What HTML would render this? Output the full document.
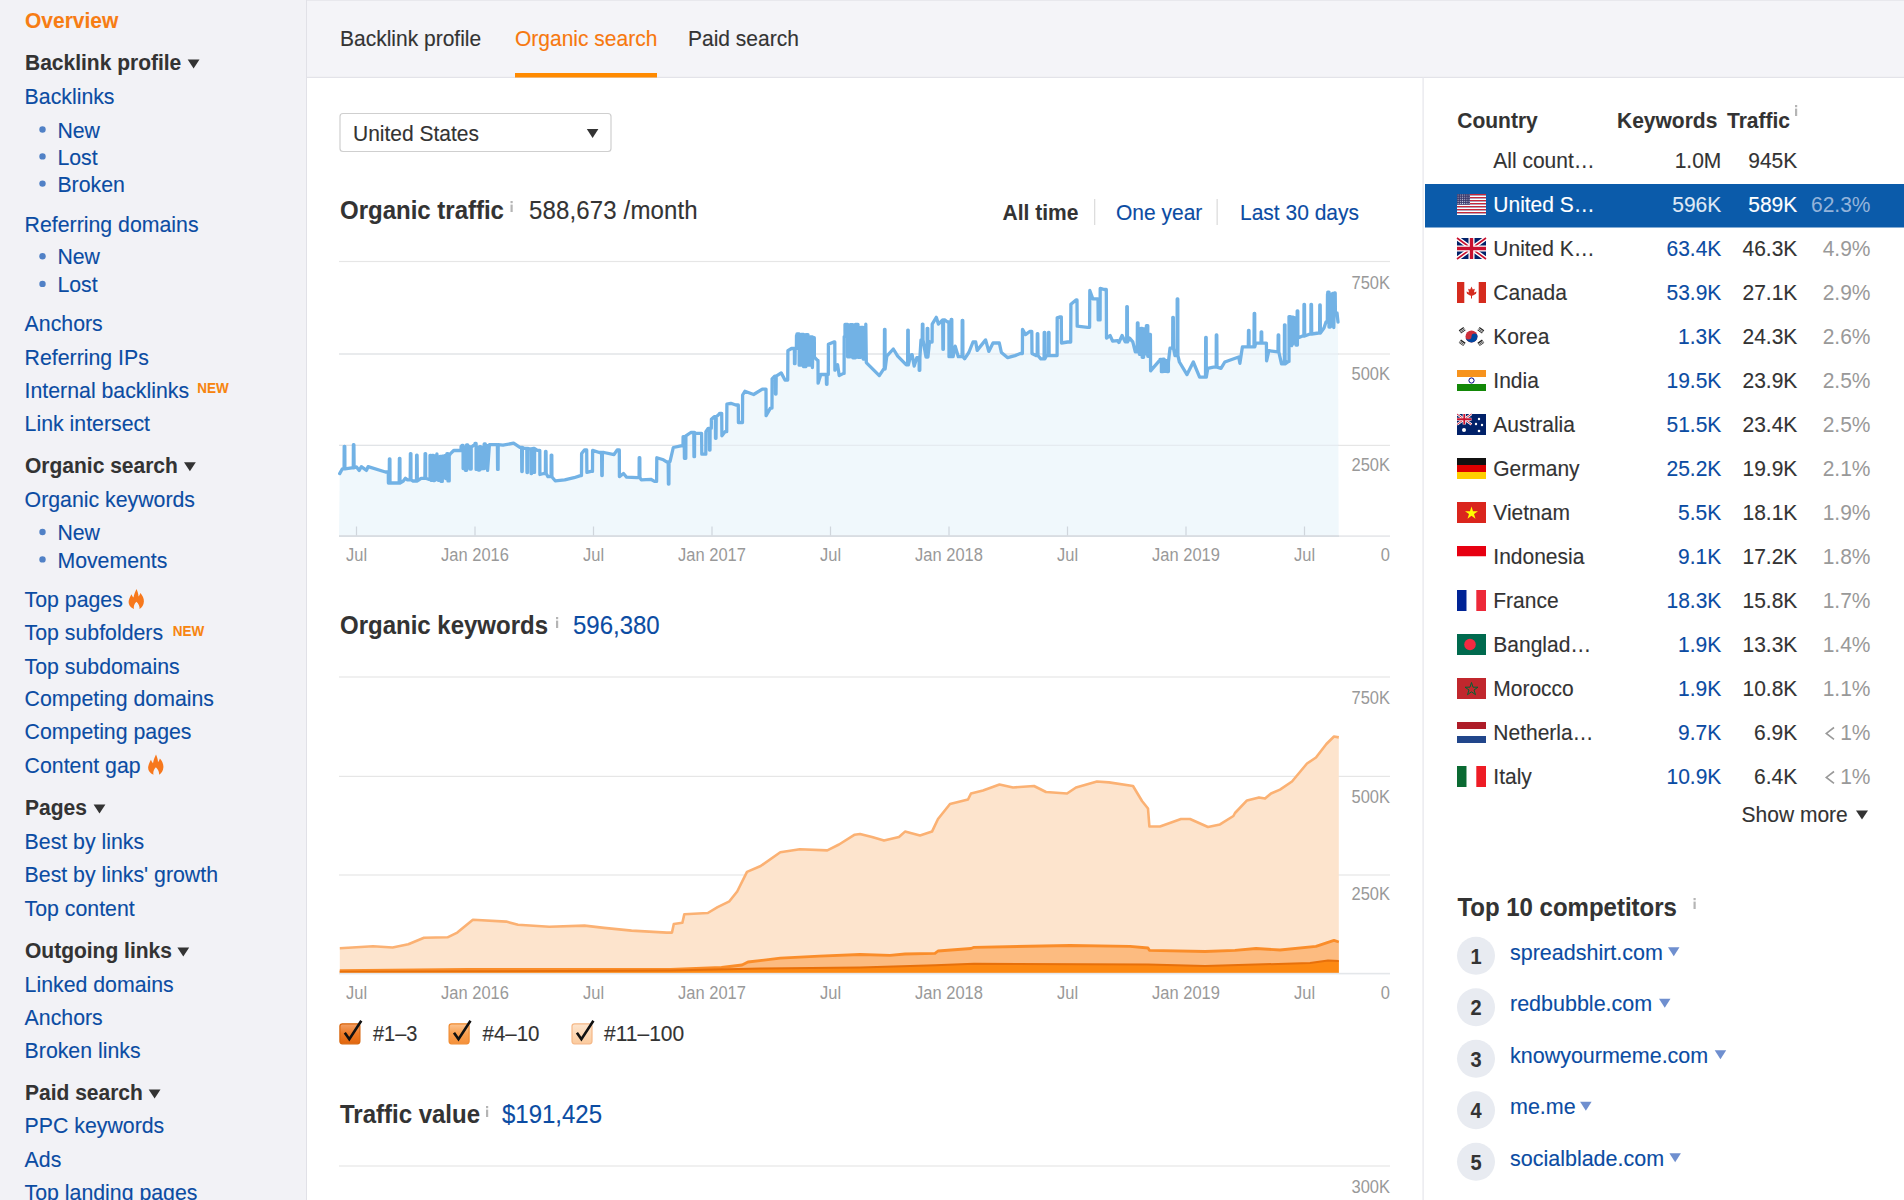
<!DOCTYPE html>
<html><head><meta charset="utf-8"><title>Organic search overview</title>
<style>
html,body{margin:0;padding:0;width:1904px;height:1200px;overflow:hidden;background:#fff}
svg{display:block;font-family:"Liberation Sans", sans-serif}
</style></head><body>
<svg width="1904" height="1200" viewBox="0 0 1904 1200">
<defs>
<linearGradient id="cb1" x1="0" y1="0" x2="0" y2="1"><stop offset="0" stop-color="#f3a066"/><stop offset="0.5" stop-color="#ec7a26"/><stop offset="1" stop-color="#e2660e"/></linearGradient>
<linearGradient id="cb2" x1="0" y1="0" x2="0" y2="1"><stop offset="0" stop-color="#fcc592"/><stop offset="0.5" stop-color="#f9a050"/><stop offset="1" stop-color="#f5903a"/></linearGradient>
<linearGradient id="cb3" x1="0" y1="0" x2="0" y2="1"><stop offset="0" stop-color="#fde5ce"/><stop offset="1" stop-color="#fbca9c"/></linearGradient>
<pattern id="stars" width="2.2" height="2.1" patternUnits="userSpaceOnUse"><rect width="2.2" height="2.1" fill="#3c3b6e"/><circle cx="1.1" cy="1.05" r="0.55" fill="#dfe3f0"/></pattern>
</defs>
<g id="sidebar">
<rect x="0" y="0" width="1904" height="1200" fill="#ffffff"/>
<rect x="0" y="0" width="306.5" height="1200" fill="#f2f2f6"/>
<rect x="306" y="0" width="1" height="1200" fill="#e1e1e7"/>
<rect x="307" y="0" width="1597" height="76" fill="#f4f4f8"/>
<rect x="307" y="0" width="1597" height="1" fill="#e8e8ed"/>
<rect x="307" y="76.5" width="1597" height="1.5" fill="#e3e3e9"/>
<rect x="1422.5" y="77" width="1.2" height="1123" fill="#e6e6ec"/>
<text transform="translate(25,28.20) scale(1,1.06)" font-size="21" font-weight="700" fill="#f77d14" stroke="#f77d14" stroke-width="0.072" text-anchor="start" >Overview</text>
<text transform="translate(25,69.90) scale(1,1.06)" font-size="21" font-weight="700" fill="#333333" stroke="#333333" stroke-width="0.072" text-anchor="start" >Backlink profile</text>
<path d="M187.7 59.5h11.8l-5.90 9z" fill="#333333"/>
<text transform="translate(24.6,104.10) scale(1,1.06)" font-size="21.3" font-weight="400" fill="#0b4ca3" stroke="#0b4ca3" stroke-width="0.12" text-anchor="start" >Backlinks</text>
<circle cx="42.5" cy="129.5" r="3.2" fill="#5181c6"/>
<text transform="translate(57.4,137.60) scale(1,1.06)" font-size="21.3" font-weight="400" fill="#0b4ca3" stroke="#0b4ca3" stroke-width="0.12" text-anchor="start" >New</text>
<circle cx="42.5" cy="156.4" r="3.2" fill="#5181c6"/>
<text transform="translate(57.4,164.50) scale(1,1.06)" font-size="21.3" font-weight="400" fill="#0b4ca3" stroke="#0b4ca3" stroke-width="0.12" text-anchor="start" >Lost</text>
<circle cx="42.5" cy="183.6" r="3.2" fill="#5181c6"/>
<text transform="translate(57.4,191.70) scale(1,1.06)" font-size="21.3" font-weight="400" fill="#0b4ca3" stroke="#0b4ca3" stroke-width="0.12" text-anchor="start" >Broken</text>
<text transform="translate(24.6,231.50) scale(1,1.06)" font-size="21.3" font-weight="400" fill="#0b4ca3" stroke="#0b4ca3" stroke-width="0.12" text-anchor="start" >Referring domains</text>
<circle cx="42.5" cy="256.20000000000005" r="3.2" fill="#5181c6"/>
<text transform="translate(57.4,264.30) scale(1,1.06)" font-size="21.3" font-weight="400" fill="#0b4ca3" stroke="#0b4ca3" stroke-width="0.12" text-anchor="start" >New</text>
<circle cx="42.5" cy="283.90000000000003" r="3.2" fill="#5181c6"/>
<text transform="translate(57.4,292.00) scale(1,1.06)" font-size="21.3" font-weight="400" fill="#0b4ca3" stroke="#0b4ca3" stroke-width="0.12" text-anchor="start" >Lost</text>
<text transform="translate(24.6,331.30) scale(1,1.06)" font-size="21.3" font-weight="400" fill="#0b4ca3" stroke="#0b4ca3" stroke-width="0.12" text-anchor="start" >Anchors</text>
<text transform="translate(24.6,364.50) scale(1,1.06)" font-size="21.3" font-weight="400" fill="#0b4ca3" stroke="#0b4ca3" stroke-width="0.12" text-anchor="start" >Referring IPs</text>
<text transform="translate(24.6,397.70) scale(1,1.06)" font-size="21.3" font-weight="400" fill="#0b4ca3" stroke="#0b4ca3" stroke-width="0.12" text-anchor="start" >Internal backlinks</text>
<text transform="translate(197.3,393.10) scale(1,1.06)" font-size="13.5" font-weight="700" fill="#f7850f" stroke="#f7850f" stroke-width="0.072" text-anchor="start" >NEW</text>
<text transform="translate(24.6,431.30) scale(1,1.06)" font-size="21.3" font-weight="400" fill="#0b4ca3" stroke="#0b4ca3" stroke-width="0.12" text-anchor="start" >Link intersect</text>
<text transform="translate(25,472.70) scale(1,1.06)" font-size="21" font-weight="700" fill="#333333" stroke="#333333" stroke-width="0.072" text-anchor="start" >Organic search</text>
<path d="M184 462.3h11.8l-5.90 9z" fill="#333333"/>
<text transform="translate(24.6,506.50) scale(1,1.06)" font-size="21.3" font-weight="400" fill="#0b4ca3" stroke="#0b4ca3" stroke-width="0.12" text-anchor="start" >Organic keywords</text>
<circle cx="42.5" cy="532.0" r="3.2" fill="#5181c6"/>
<text transform="translate(57.4,540.10) scale(1,1.06)" font-size="21.3" font-weight="400" fill="#0b4ca3" stroke="#0b4ca3" stroke-width="0.12" text-anchor="start" >New</text>
<circle cx="42.5" cy="559.4" r="3.2" fill="#5181c6"/>
<text transform="translate(57.4,567.50) scale(1,1.06)" font-size="21.3" font-weight="400" fill="#0b4ca3" stroke="#0b4ca3" stroke-width="0.12" text-anchor="start" >Movements</text>
<text transform="translate(24.6,607.10) scale(1,1.06)" font-size="21.3" font-weight="400" fill="#0b4ca3" stroke="#0b4ca3" stroke-width="0.12" text-anchor="start" >Top pages</text>
<path transform="translate(128.5,609.1)" d="M5.5 0C1.5 -1.5 -0.5 -5 0.3 -8.5C0.8 -11 2 -13 2.9 -14.9C3.5 -13.5 4.2 -12.3 5 -11.5C5.5 -15 6.8 -17.5 8 -20.2C9.2 -17.5 10 -15 10 -12.5C10.8 -13.5 11.5 -14.8 11.9 -16.1C14 -13.5 15.6 -11 15.4 -7.5C15.2 -4 13.5 -1.2 11 0C11.5 -2.5 10 -5.5 7.9 -7.4C5.8 -5.5 4.8 -2.5 5.5 0Z" fill="#f7781c"/>
<text transform="translate(24.6,640.30) scale(1,1.06)" font-size="21.3" font-weight="400" fill="#0b4ca3" stroke="#0b4ca3" stroke-width="0.12" text-anchor="start" >Top subfolders</text>
<text transform="translate(172.8,635.70) scale(1,1.06)" font-size="13.5" font-weight="700" fill="#f7850f" stroke="#f7850f" stroke-width="0.072" text-anchor="start" >NEW</text>
<text transform="translate(24.6,673.60) scale(1,1.06)" font-size="21.3" font-weight="400" fill="#0b4ca3" stroke="#0b4ca3" stroke-width="0.12" text-anchor="start" >Top subdomains</text>
<text transform="translate(24.6,706.20) scale(1,1.06)" font-size="21.3" font-weight="400" fill="#0b4ca3" stroke="#0b4ca3" stroke-width="0.12" text-anchor="start" >Competing domains</text>
<text transform="translate(24.6,739.10) scale(1,1.06)" font-size="21.3" font-weight="400" fill="#0b4ca3" stroke="#0b4ca3" stroke-width="0.12" text-anchor="start" >Competing pages</text>
<text transform="translate(24.6,772.70) scale(1,1.06)" font-size="21.3" font-weight="400" fill="#0b4ca3" stroke="#0b4ca3" stroke-width="0.12" text-anchor="start" >Content gap</text>
<path transform="translate(148,774.7)" d="M5.5 0C1.5 -1.5 -0.5 -5 0.3 -8.5C0.8 -11 2 -13 2.9 -14.9C3.5 -13.5 4.2 -12.3 5 -11.5C5.5 -15 6.8 -17.5 8 -20.2C9.2 -17.5 10 -15 10 -12.5C10.8 -13.5 11.5 -14.8 11.9 -16.1C14 -13.5 15.6 -11 15.4 -7.5C15.2 -4 13.5 -1.2 11 0C11.5 -2.5 10 -5.5 7.9 -7.4C5.8 -5.5 4.8 -2.5 5.5 0Z" fill="#f7781c"/>
<text transform="translate(25,815.00) scale(1,1.06)" font-size="21" font-weight="700" fill="#333333" stroke="#333333" stroke-width="0.072" text-anchor="start" >Pages</text>
<path d="M93.6 804.6h11.8l-5.90 9z" fill="#333333"/>
<text transform="translate(24.6,848.90) scale(1,1.06)" font-size="21.3" font-weight="400" fill="#0b4ca3" stroke="#0b4ca3" stroke-width="0.12" text-anchor="start" >Best by links</text>
<text transform="translate(24.6,882.00) scale(1,1.06)" font-size="21.3" font-weight="400" fill="#0b4ca3" stroke="#0b4ca3" stroke-width="0.12" text-anchor="start" >Best by links' growth</text>
<text transform="translate(24.6,915.50) scale(1,1.06)" font-size="21.3" font-weight="400" fill="#0b4ca3" stroke="#0b4ca3" stroke-width="0.12" text-anchor="start" >Top content</text>
<text transform="translate(25,957.90) scale(1,1.06)" font-size="21" font-weight="700" fill="#333333" stroke="#333333" stroke-width="0.072" text-anchor="start" >Outgoing links</text>
<path d="M177.4 947.5h11.8l-5.90 9z" fill="#333333"/>
<text transform="translate(24.6,991.50) scale(1,1.06)" font-size="21.3" font-weight="400" fill="#0b4ca3" stroke="#0b4ca3" stroke-width="0.12" text-anchor="start" >Linked domains</text>
<text transform="translate(24.6,1024.80) scale(1,1.06)" font-size="21.3" font-weight="400" fill="#0b4ca3" stroke="#0b4ca3" stroke-width="0.12" text-anchor="start" >Anchors</text>
<text transform="translate(24.6,1058.40) scale(1,1.06)" font-size="21.3" font-weight="400" fill="#0b4ca3" stroke="#0b4ca3" stroke-width="0.12" text-anchor="start" >Broken links</text>
<text transform="translate(25,1099.80) scale(1,1.06)" font-size="21" font-weight="700" fill="#333333" stroke="#333333" stroke-width="0.072" text-anchor="start" >Paid search</text>
<path d="M148.7 1089.4h11.8l-5.90 9z" fill="#333333"/>
<text transform="translate(24.6,1133.40) scale(1,1.06)" font-size="21.3" font-weight="400" fill="#0b4ca3" stroke="#0b4ca3" stroke-width="0.12" text-anchor="start" >PPC keywords</text>
<text transform="translate(24.6,1167.20) scale(1,1.06)" font-size="21.3" font-weight="400" fill="#0b4ca3" stroke="#0b4ca3" stroke-width="0.12" text-anchor="start" >Ads</text>
<text transform="translate(24.6,1200.20) scale(1,1.06)" font-size="21.3" font-weight="400" fill="#0b4ca3" stroke="#0b4ca3" stroke-width="0.12" text-anchor="start" >Top landing pages</text>
<text transform="translate(340,46.30) scale(1,1.06)" font-size="21" font-weight="400" fill="#333333" stroke="#333333" stroke-width="0.12" text-anchor="start" >Backlink profile</text>
<text transform="translate(515,46.30) scale(1,1.06)" font-size="21" font-weight="400" fill="#f7780f" stroke="#f7780f" stroke-width="0.12" text-anchor="start" >Organic search</text>
<text transform="translate(688,46.30) scale(1,1.06)" font-size="21" font-weight="400" fill="#333333" stroke="#333333" stroke-width="0.12" text-anchor="start" >Paid search</text>
<rect x="515" y="73" width="142" height="4.5" fill="#ff8a00"/>
<rect x="340" y="113.5" width="271" height="38" rx="3" fill="#fff" stroke="#cfcfcf" stroke-width="1.2"/>
<text transform="translate(353,140.70) scale(1,1.06)" font-size="21" font-weight="400" fill="#333333" stroke="#333333" stroke-width="0.12" text-anchor="start" >United States</text>
<path d="M586.8 129h11.6l-5.80 9z" fill="#333"/>
<text transform="translate(340,218.70) scale(1,1.06)" font-size="24" font-weight="700" fill="#333333" stroke="#333333" stroke-width="0.072" text-anchor="start" >Organic traffic</text>
<rect x="510.5" y="201" width="2.2" height="2.2" fill="#b5b5b5"/><rect x="510.5" y="204.6" width="2.2" height="7.4" fill="#b5b5b5"/>
<text transform="translate(529,218.70) scale(1,1.06)" font-size="24" font-weight="400" fill="#333333" stroke="#333333" stroke-width="0.12" text-anchor="start" letter-spacing="0.15">588,673 /month</text>
<text transform="translate(1002.5,220.10) scale(1,1.06)" font-size="21" font-weight="700" fill="#333333" stroke="#333333" stroke-width="0.072" text-anchor="start" >All time</text>
<rect x="1094" y="199" width="1.3" height="26" fill="#dddddd"/>
<text transform="translate(1116,220.10) scale(1,1.06)" font-size="21" font-weight="400" fill="#0b4ca3" stroke="#0b4ca3" stroke-width="0.12" text-anchor="start" >One year</text>
<rect x="1216.5" y="199" width="1.3" height="26" fill="#dddddd"/>
<text transform="translate(1240,220.10) scale(1,1.06)" font-size="21" font-weight="400" fill="#0b4ca3" stroke="#0b4ca3" stroke-width="0.12" text-anchor="start" >Last 30 days</text>
</g>
<g id="main">
<rect x="339" y="260.9" width="1051" height="1.2" fill="#e6e6e6"/>
<rect x="339" y="353.4" width="1051" height="1.2" fill="#e6e6e6"/>
<rect x="339" y="444.79999999999995" width="1051" height="1.2" fill="#e6e6e6"/>
<polygon points="339.7,473.6 342.4,468.8 344.1,468.8 344.2,446.3 344.8,446.3 344.9,468.8 351.8,467.8 353.3,467.8 353.4,444.7 353.9,444.7 354.1,467.8 356.5,467.0 359.2,470.4 361.3,466.7 366.5,470.4 368.1,466.7 385.4,472.0 388.3,472.0 388.4,483.0 389.2,483.0 389.4,458.9 389.9,458.9 390.0,483.0 394.9,483.0 399.2,483.0 399.4,458.3 399.9,458.3 400.0,483.0 403.3,481.0 405.4,478.3 407.5,479.9 410.2,479.9 410.4,453.6 410.9,453.6 411.0,479.9 413.0,481.0 416.5,481.0 416.6,455.2 417.1,455.2 417.3,481.0 421.1,478.3 424.9,478.3 425.1,453.6 425.6,453.6 425.7,478.3 428.5,479.3 430.0,479.3 430.0,455.3 431.1,455.3 431.1,480.4 432.3,480.4 432.3,455.5 433.4,455.5 433.4,480.5 434.6,480.5 434.6,456.0 435.7,456.0 435.7,479.7 436.9,479.7 436.9,453.9 438.5,480.4 440.0,480.4 440.0,456.3 441.1,456.3 441.1,481.4 442.3,481.4 442.3,456.1 443.4,456.1 443.4,477.6 444.6,477.6 444.6,455.6 445.7,455.6 445.7,478.5 446.9,478.5 446.9,453.6 448.0,453.6 448.0,480.9 449.2,480.9 449.2,455.6 450.5,453.6 453.7,450.5 460.0,450.5 461.0,450.5 461.1,446.3 462.0,446.3 462.0,445.5 463.1,445.5 463.1,468.6 464.3,468.6 464.3,447.5 465.4,447.5 465.4,470.3 466.6,470.3 466.6,444.8 467.7,444.8 467.7,467.8 468.9,467.8 468.9,446.6 470.0,446.6 470.0,469.0 471.2,469.0 471.2,447.3 473.7,445.2 475.0,445.2 475.0,443.5 476.1,443.5 476.1,469.4 477.3,469.4 477.3,447.4 478.4,447.4 478.4,470.0 479.6,470.0 479.6,446.6 480.7,446.6 480.7,468.8 481.9,468.8 481.9,447.4 483.0,447.4 483.0,468.5 484.2,468.5 484.2,443.9 485.3,443.9 485.3,468.2 486.5,468.2 486.5,445.7 487.6,445.7 487.6,470.4 489.4,444.7 497.4,444.7 497.6,469.4 498.1,469.4 498.2,444.7 503.0,445.2 513.6,443.1 519.9,447.3 521.6,447.3 521.8,471.5 522.2,471.5 522.4,447.3 524.0,448.4 526.8,448.4 527.0,472.5 527.5,472.5 527.6,448.4 529.3,448.9 531.0,448.9 531.1,473.6 531.6,473.6 531.8,448.9 533.0,448.5 533.8,448.5 534.0,472.4 534.5,472.4 534.6,448.5 537.4,450.4 539.8,450.4 539.9,474.5 543.7,473.5 545.4,473.5 545.5,451.4 546.0,451.4 546.2,473.5 547.9,476.6 551.1,476.6 551.2,455.1 551.8,455.1 551.9,476.6 552.6,477.7 555.2,480.8 564.7,479.8 574.1,477.7 580.4,475.6 581.5,475.6 581.6,453.5 584.6,449.9 586.0,450.0 586.7,450.0 586.9,472.4 590.9,471.4 592.5,471.4 592.6,450.4 599.3,452.5 601.6,452.5 601.8,475.6 602.2,475.6 602.4,452.5 604.0,452.5 614.0,454.6 617.2,449.9 619.3,449.9 619.4,476.6 623.5,473.5 626.6,477.2 637.1,477.7 639.1,477.7 639.2,457.7 639.8,457.7 639.9,477.7 641.3,479.8 650.8,479.3 654.5,481.4 656.6,481.4 656.8,457.7 663.4,459.8 666.6,461.9 668.2,461.9 668.4,484.0 668.9,484.0 669.0,461.9 670.0,461.7 673.3,447.5 680.8,445.8 683.0,445.8 683.1,436.7 684.2,436.7 684.4,458.3 685.8,458.3 685.9,435.8 690.8,432.5 693.8,432.5 694.0,456.7 694.5,456.7 694.6,432.5 695.0,433.3 700.0,433.3 701.6,433.3 701.8,454.2 704.2,454.2 705.8,454.2 705.9,431.7 708.3,428.3 709.3,428.3 709.5,450.0 710.0,450.0 710.1,428.3 711.3,428.3 711.4,419.2 714.2,416.7 715.4,416.7 715.5,438.3 716.0,438.3 716.2,416.7 718.3,415.0 719.7,413.3 721.7,413.3 721.9,435.8 725.0,431.7 726.7,431.7 726.9,404.2 730.8,403.3 735.8,405.0 738.3,405.0 738.4,422.5 740.8,422.5 742.5,422.5 742.6,395.0 744.9,391.3 753.6,394.5 762.3,389.1 763.6,389.1 766.0,389.1 766.1,415.7 770.4,408.1 772.0,408.1 772.1,378.8 774.7,376.1 775.4,376.1 775.5,394.0 776.0,394.0 776.2,376.1 781.2,372.9 785.0,380.0 787.7,380.0 787.9,350.7 791.5,348.5 794.4,348.5 794.5,363.7 795.0,363.7 795.2,348.5 796.4,348.5 796.5,335.5 797.0,335.5 797.0,334.0 799.2,334.0 799.2,365.2 801.4,365.2 801.4,334.4 803.6,334.4 803.6,366.7 805.8,366.7 805.8,334.7 808.0,334.7 808.0,365.1 810.2,365.1 810.2,336.9 812.4,336.9 812.4,367.5 813.2,337.7 814.3,337.7 814.4,357.2 817.5,360.4 818.0,360.4 818.1,383.2 820.8,374.5 825.1,374.5 826.3,374.5 826.5,384.3 827.0,384.3 827.1,374.5 828.3,374.5 828.4,344.2 833.8,342.0 834.8,342.0 834.9,370.2 837.6,364.8 839.2,375.6 843.5,373.4 844.1,373.4 844.2,336.6 845.0,336.6 845.0,324.4 847.6,324.4 847.6,356.8 850.2,356.8 850.2,324.7 852.8,324.7 852.8,357.8 855.4,357.8 855.4,324.5 858.0,324.5 858.0,357.3 860.6,357.3 860.6,327.3 863.2,327.3 863.2,359.0 865.8,359.0 865.8,324.2 866.3,362.6 879.3,375.6 883.6,369.1 884.3,369.1 884.5,329.5 885.0,329.5 885.1,369.1 886.8,356.1 893.3,349.0 897.7,356.1 906.3,364.8 907.6,364.8 907.8,330.1 908.2,330.1 908.4,364.8 910.7,355.0 912.1,354.6 914.2,366.1 916.8,357.7 919.1,357.7 919.2,370.3 919.8,370.3 919.9,357.7 921.0,339.9 922.2,339.9 922.4,324.1 922.9,324.1 923.0,339.9 926.0,357.0 927.1,357.0 927.2,328.3 927.8,328.3 927.9,357.0 929.5,342.0 932.1,342.0 932.2,324.1 936.3,317.3 938.4,324.1 942.6,319.9 942.7,319.9 942.9,349.3 943.4,349.3 943.5,319.9 944.7,319.9 947.5,322.0 948.9,322.0 949.0,356.7 951.1,356.7 951.2,319.4 951.8,319.4 951.9,356.7 953.1,356.7 955.2,346.2 958.3,356.7 962.1,356.7 962.2,320.4 962.8,320.4 962.9,356.7 964.6,358.8 968.8,352.5 973.0,342.0 975.7,342.0 977.2,350.4 985.6,339.9 988.8,351.4 993.0,343.0 999.3,343.0 1001.4,352.5 1007.7,357.7 1015.0,355.6 1020.3,353.5 1022.4,353.5 1022.5,329.4 1025.5,334.6 1029.7,331.5 1031.8,331.5 1032.0,353.5 1036.0,355.6 1037.2,355.6 1037.3,333.6 1037.8,333.6 1038.0,355.6 1040.8,358.8 1044.1,358.8 1044.2,332.5 1044.8,332.5 1044.9,358.8 1046.6,355.6 1048.3,355.6 1048.5,332.5 1049.0,332.5 1049.1,355.6 1053.9,355.6 1057.1,355.6 1057.2,317.8 1060.2,316.8 1061.3,316.8 1061.5,343.0 1067.6,342.0 1070.7,342.0 1070.9,304.2 1076.0,300.0 1077.0,300.0 1077.2,326.2 1087.5,327.3 1089.6,327.3 1089.8,290.5 1092.8,298.9 1098.0,298.9 1098.2,319.9 1100.1,319.9 1100.2,288.4 1104.3,289.5 1106.3,289.5 1106.5,338.1 1110.1,335.5 1112.6,341.2 1117.6,340.6 1118.9,342.5 1122.1,335.5 1125.2,341.9 1126.7,341.9 1126.8,306.6 1127.3,306.6 1127.5,341.9 1129.6,338.1 1132.8,341.9 1135.3,351.9 1137.2,351.9 1137.4,322.9 1138.0,322.9 1138.0,329.1 1139.4,329.1 1139.4,354.3 1140.8,354.3 1140.8,328.5 1142.2,328.5 1142.2,357.3 1143.6,357.3 1143.6,329.0 1145.0,329.0 1145.0,353.9 1146.4,353.9 1146.4,325.7 1147.8,325.7 1147.8,356.3 1149.2,334.3 1150.4,334.3 1150.6,370.8 1159.2,360.8 1160.0,360.8 1160.0,359.5 1161.4,359.5 1161.4,371.7 1162.8,371.7 1162.8,359.2 1164.2,359.2 1164.2,371.4 1165.6,371.4 1165.6,360.7 1167.0,360.7 1167.0,371.6 1168.4,371.6 1168.4,362.2 1170.0,348.2 1172.7,348.2 1172.8,317.3 1173.3,317.3 1173.5,348.2 1175.0,355.7 1177.1,355.7 1177.2,299.0 1177.8,299.0 1177.9,355.7 1179.4,362.0 1187.0,374.6 1193.3,362.0 1199.6,377.1 1205.5,377.1 1205.7,337.4 1206.2,337.4 1206.3,377.1 1207.8,368.3 1213.5,367.1 1216.2,367.1 1216.3,334.9 1216.8,334.9 1217.0,367.1 1221.0,368.3 1224.8,362.0 1238.7,357.0 1239.9,363.3 1242.4,346.9 1248.3,346.9 1248.5,330.5 1249.0,330.5 1249.1,346.9 1251.3,346.9 1254.0,346.9 1254.2,313.5 1254.7,313.5 1254.8,346.9 1255.7,343.1 1261.0,343.1 1261.2,331.8 1261.7,331.8 1261.8,343.1 1266.4,343.1 1266.6,360.8 1268.9,350.7 1277.7,351.9 1278.0,351.9 1278.2,334.9 1278.7,334.9 1278.8,351.9 1281.5,363.9 1284.3,363.9 1284.5,324.8 1285.0,324.8 1285.1,363.9 1288.5,361.4 1289.0,361.4 1289.0,316.6 1290.4,316.6 1290.4,342.7 1291.8,342.7 1291.8,317.2 1293.2,317.2 1293.2,343.0 1294.6,343.0 1294.6,317.9 1296.0,317.9 1296.0,345.1 1297.4,345.1 1297.4,319.3 1291.6,345.6 1296.0,338.0 1297.1,338.0 1297.2,311.0 1297.8,311.0 1297.9,338.0 1302.5,336.0 1303.9,336.0 1304.0,304.5 1304.5,304.5 1304.7,336.0 1310.0,334.0 1310.9,334.0 1311.0,304.5 1311.5,304.5 1311.7,334.0 1318.5,333.0 1319.6,333.0 1319.8,305.0 1320.2,305.0 1320.4,333.0 1324.0,328.0 1326.0,322.0 1327.3,322.0 1327.5,294.0 1327.8,294.0 1327.8,292.1 1329.0,292.1 1329.0,327.1 1330.2,327.1 1330.2,294.3 1331.4,294.3 1331.4,326.0 1332.6,326.0 1332.6,293.4 1333.8,293.4 1333.8,327.5 1334.5,293.0 1335.2,293.0 1335.4,313.0 1337.0,313.0 1338.0,322.0 1338.7,536.0 339.0,536.0" fill="#f0f8fc"/>
<rect x="339" y="353.4" width="1000" height="1.2" fill="#dde3e8" opacity="0.6"/>
<rect x="339" y="444.79999999999995" width="1000" height="1.2" fill="#dde3e8" opacity="0.6"/>
<polyline points="339.7,473.6 342.4,468.8 344.1,468.8 344.2,446.3 344.8,446.3 344.9,468.8 351.8,467.8 353.3,467.8 353.4,444.7 353.9,444.7 354.1,467.8 356.5,467.0 359.2,470.4 361.3,466.7 366.5,470.4 368.1,466.7 385.4,472.0 388.3,472.0 388.4,483.0 389.2,483.0 389.4,458.9 389.9,458.9 390.0,483.0 394.9,483.0 399.2,483.0 399.4,458.3 399.9,458.3 400.0,483.0 403.3,481.0 405.4,478.3 407.5,479.9 410.2,479.9 410.4,453.6 410.9,453.6 411.0,479.9 413.0,481.0 416.5,481.0 416.6,455.2 417.1,455.2 417.3,481.0 421.1,478.3 424.9,478.3 425.1,453.6 425.6,453.6 425.7,478.3 428.5,479.3 430.0,479.3 430.0,455.3 431.1,455.3 431.1,480.4 432.3,480.4 432.3,455.5 433.4,455.5 433.4,480.5 434.6,480.5 434.6,456.0 435.7,456.0 435.7,479.7 436.9,479.7 436.9,453.9 438.5,480.4 440.0,480.4 440.0,456.3 441.1,456.3 441.1,481.4 442.3,481.4 442.3,456.1 443.4,456.1 443.4,477.6 444.6,477.6 444.6,455.6 445.7,455.6 445.7,478.5 446.9,478.5 446.9,453.6 448.0,453.6 448.0,480.9 449.2,480.9 449.2,455.6 450.5,453.6 453.7,450.5 460.0,450.5 461.0,450.5 461.1,446.3 462.0,446.3 462.0,445.5 463.1,445.5 463.1,468.6 464.3,468.6 464.3,447.5 465.4,447.5 465.4,470.3 466.6,470.3 466.6,444.8 467.7,444.8 467.7,467.8 468.9,467.8 468.9,446.6 470.0,446.6 470.0,469.0 471.2,469.0 471.2,447.3 473.7,445.2 475.0,445.2 475.0,443.5 476.1,443.5 476.1,469.4 477.3,469.4 477.3,447.4 478.4,447.4 478.4,470.0 479.6,470.0 479.6,446.6 480.7,446.6 480.7,468.8 481.9,468.8 481.9,447.4 483.0,447.4 483.0,468.5 484.2,468.5 484.2,443.9 485.3,443.9 485.3,468.2 486.5,468.2 486.5,445.7 487.6,445.7 487.6,470.4 489.4,444.7 497.4,444.7 497.6,469.4 498.1,469.4 498.2,444.7 503.0,445.2 513.6,443.1 519.9,447.3 521.6,447.3 521.8,471.5 522.2,471.5 522.4,447.3 524.0,448.4 526.8,448.4 527.0,472.5 527.5,472.5 527.6,448.4 529.3,448.9 531.0,448.9 531.1,473.6 531.6,473.6 531.8,448.9 533.0,448.5 533.8,448.5 534.0,472.4 534.5,472.4 534.6,448.5 537.4,450.4 539.8,450.4 539.9,474.5 543.7,473.5 545.4,473.5 545.5,451.4 546.0,451.4 546.2,473.5 547.9,476.6 551.1,476.6 551.2,455.1 551.8,455.1 551.9,476.6 552.6,477.7 555.2,480.8 564.7,479.8 574.1,477.7 580.4,475.6 581.5,475.6 581.6,453.5 584.6,449.9 586.0,450.0 586.7,450.0 586.9,472.4 590.9,471.4 592.5,471.4 592.6,450.4 599.3,452.5 601.6,452.5 601.8,475.6 602.2,475.6 602.4,452.5 604.0,452.5 614.0,454.6 617.2,449.9 619.3,449.9 619.4,476.6 623.5,473.5 626.6,477.2 637.1,477.7 639.1,477.7 639.2,457.7 639.8,457.7 639.9,477.7 641.3,479.8 650.8,479.3 654.5,481.4 656.6,481.4 656.8,457.7 663.4,459.8 666.6,461.9 668.2,461.9 668.4,484.0 668.9,484.0 669.0,461.9 670.0,461.7 673.3,447.5 680.8,445.8 683.0,445.8 683.1,436.7 684.2,436.7 684.4,458.3 685.8,458.3 685.9,435.8 690.8,432.5 693.8,432.5 694.0,456.7 694.5,456.7 694.6,432.5 695.0,433.3 700.0,433.3 701.6,433.3 701.8,454.2 704.2,454.2 705.8,454.2 705.9,431.7 708.3,428.3 709.3,428.3 709.5,450.0 710.0,450.0 710.1,428.3 711.3,428.3 711.4,419.2 714.2,416.7 715.4,416.7 715.5,438.3 716.0,438.3 716.2,416.7 718.3,415.0 719.7,413.3 721.7,413.3 721.9,435.8 725.0,431.7 726.7,431.7 726.9,404.2 730.8,403.3 735.8,405.0 738.3,405.0 738.4,422.5 740.8,422.5 742.5,422.5 742.6,395.0 744.9,391.3 753.6,394.5 762.3,389.1 763.6,389.1 766.0,389.1 766.1,415.7 770.4,408.1 772.0,408.1 772.1,378.8 774.7,376.1 775.4,376.1 775.5,394.0 776.0,394.0 776.2,376.1 781.2,372.9 785.0,380.0 787.7,380.0 787.9,350.7 791.5,348.5 794.4,348.5 794.5,363.7 795.0,363.7 795.2,348.5 796.4,348.5 796.5,335.5 797.0,335.5 797.0,334.0 799.2,334.0 799.2,365.2 801.4,365.2 801.4,334.4 803.6,334.4 803.6,366.7 805.8,366.7 805.8,334.7 808.0,334.7 808.0,365.1 810.2,365.1 810.2,336.9 812.4,336.9 812.4,367.5 813.2,337.7 814.3,337.7 814.4,357.2 817.5,360.4 818.0,360.4 818.1,383.2 820.8,374.5 825.1,374.5 826.3,374.5 826.5,384.3 827.0,384.3 827.1,374.5 828.3,374.5 828.4,344.2 833.8,342.0 834.8,342.0 834.9,370.2 837.6,364.8 839.2,375.6 843.5,373.4 844.1,373.4 844.2,336.6 845.0,336.6 845.0,324.4 847.6,324.4 847.6,356.8 850.2,356.8 850.2,324.7 852.8,324.7 852.8,357.8 855.4,357.8 855.4,324.5 858.0,324.5 858.0,357.3 860.6,357.3 860.6,327.3 863.2,327.3 863.2,359.0 865.8,359.0 865.8,324.2 866.3,362.6 879.3,375.6 883.6,369.1 884.3,369.1 884.5,329.5 885.0,329.5 885.1,369.1 886.8,356.1 893.3,349.0 897.7,356.1 906.3,364.8 907.6,364.8 907.8,330.1 908.2,330.1 908.4,364.8 910.7,355.0 912.1,354.6 914.2,366.1 916.8,357.7 919.1,357.7 919.2,370.3 919.8,370.3 919.9,357.7 921.0,339.9 922.2,339.9 922.4,324.1 922.9,324.1 923.0,339.9 926.0,357.0 927.1,357.0 927.2,328.3 927.8,328.3 927.9,357.0 929.5,342.0 932.1,342.0 932.2,324.1 936.3,317.3 938.4,324.1 942.6,319.9 942.7,319.9 942.9,349.3 943.4,349.3 943.5,319.9 944.7,319.9 947.5,322.0 948.9,322.0 949.0,356.7 951.1,356.7 951.2,319.4 951.8,319.4 951.9,356.7 953.1,356.7 955.2,346.2 958.3,356.7 962.1,356.7 962.2,320.4 962.8,320.4 962.9,356.7 964.6,358.8 968.8,352.5 973.0,342.0 975.7,342.0 977.2,350.4 985.6,339.9 988.8,351.4 993.0,343.0 999.3,343.0 1001.4,352.5 1007.7,357.7 1015.0,355.6 1020.3,353.5 1022.4,353.5 1022.5,329.4 1025.5,334.6 1029.7,331.5 1031.8,331.5 1032.0,353.5 1036.0,355.6 1037.2,355.6 1037.3,333.6 1037.8,333.6 1038.0,355.6 1040.8,358.8 1044.1,358.8 1044.2,332.5 1044.8,332.5 1044.9,358.8 1046.6,355.6 1048.3,355.6 1048.5,332.5 1049.0,332.5 1049.1,355.6 1053.9,355.6 1057.1,355.6 1057.2,317.8 1060.2,316.8 1061.3,316.8 1061.5,343.0 1067.6,342.0 1070.7,342.0 1070.9,304.2 1076.0,300.0 1077.0,300.0 1077.2,326.2 1087.5,327.3 1089.6,327.3 1089.8,290.5 1092.8,298.9 1098.0,298.9 1098.2,319.9 1100.1,319.9 1100.2,288.4 1104.3,289.5 1106.3,289.5 1106.5,338.1 1110.1,335.5 1112.6,341.2 1117.6,340.6 1118.9,342.5 1122.1,335.5 1125.2,341.9 1126.7,341.9 1126.8,306.6 1127.3,306.6 1127.5,341.9 1129.6,338.1 1132.8,341.9 1135.3,351.9 1137.2,351.9 1137.4,322.9 1138.0,322.9 1138.0,329.1 1139.4,329.1 1139.4,354.3 1140.8,354.3 1140.8,328.5 1142.2,328.5 1142.2,357.3 1143.6,357.3 1143.6,329.0 1145.0,329.0 1145.0,353.9 1146.4,353.9 1146.4,325.7 1147.8,325.7 1147.8,356.3 1149.2,334.3 1150.4,334.3 1150.6,370.8 1159.2,360.8 1160.0,360.8 1160.0,359.5 1161.4,359.5 1161.4,371.7 1162.8,371.7 1162.8,359.2 1164.2,359.2 1164.2,371.4 1165.6,371.4 1165.6,360.7 1167.0,360.7 1167.0,371.6 1168.4,371.6 1168.4,362.2 1170.0,348.2 1172.7,348.2 1172.8,317.3 1173.3,317.3 1173.5,348.2 1175.0,355.7 1177.1,355.7 1177.2,299.0 1177.8,299.0 1177.9,355.7 1179.4,362.0 1187.0,374.6 1193.3,362.0 1199.6,377.1 1205.5,377.1 1205.7,337.4 1206.2,337.4 1206.3,377.1 1207.8,368.3 1213.5,367.1 1216.2,367.1 1216.3,334.9 1216.8,334.9 1217.0,367.1 1221.0,368.3 1224.8,362.0 1238.7,357.0 1239.9,363.3 1242.4,346.9 1248.3,346.9 1248.5,330.5 1249.0,330.5 1249.1,346.9 1251.3,346.9 1254.0,346.9 1254.2,313.5 1254.7,313.5 1254.8,346.9 1255.7,343.1 1261.0,343.1 1261.2,331.8 1261.7,331.8 1261.8,343.1 1266.4,343.1 1266.6,360.8 1268.9,350.7 1277.7,351.9 1278.0,351.9 1278.2,334.9 1278.7,334.9 1278.8,351.9 1281.5,363.9 1284.3,363.9 1284.5,324.8 1285.0,324.8 1285.1,363.9 1288.5,361.4 1289.0,361.4 1289.0,316.6 1290.4,316.6 1290.4,342.7 1291.8,342.7 1291.8,317.2 1293.2,317.2 1293.2,343.0 1294.6,343.0 1294.6,317.9 1296.0,317.9 1296.0,345.1 1297.4,345.1 1297.4,319.3 1291.6,345.6 1296.0,338.0 1297.1,338.0 1297.2,311.0 1297.8,311.0 1297.9,338.0 1302.5,336.0 1303.9,336.0 1304.0,304.5 1304.5,304.5 1304.7,336.0 1310.0,334.0 1310.9,334.0 1311.0,304.5 1311.5,304.5 1311.7,334.0 1318.5,333.0 1319.6,333.0 1319.8,305.0 1320.2,305.0 1320.4,333.0 1324.0,328.0 1326.0,322.0 1327.3,322.0 1327.5,294.0 1327.8,294.0 1327.8,292.1 1329.0,292.1 1329.0,327.1 1330.2,327.1 1330.2,294.3 1331.4,294.3 1331.4,326.0 1332.6,326.0 1332.6,293.4 1333.8,293.4 1333.8,327.5 1334.5,293.0 1335.2,293.0 1335.4,313.0 1337.0,313.0 1338.0,322.0" fill="none" stroke="#72b2e5" stroke-width="3.3" stroke-linejoin="round" stroke-linecap="round"/>
<rect x="339" y="535.3" width="1051" height="1.6" fill="#e6e7ea"/><rect x="339" y="535.3" width="1000" height="1.6" fill="#d6dce2"/>
<rect x="355.9" y="526.5" width="1.2" height="9" fill="#d0d6dc"/>
<rect x="474.4" y="526.5" width="1.2" height="9" fill="#d0d6dc"/>
<rect x="592.9" y="526.5" width="1.2" height="9" fill="#d0d6dc"/>
<rect x="711.4" y="526.5" width="1.2" height="9" fill="#d0d6dc"/>
<rect x="829.9" y="526.5" width="1.2" height="9" fill="#d0d6dc"/>
<rect x="948.4" y="526.5" width="1.2" height="9" fill="#d0d6dc"/>
<rect x="1066.9" y="526.5" width="1.2" height="9" fill="#d0d6dc"/>
<rect x="1185.4" y="526.5" width="1.2" height="9" fill="#d0d6dc"/>
<rect x="1303.9" y="526.5" width="1.2" height="9" fill="#d0d6dc"/>
<text transform="translate(356.5,561.40) scale(1,1.06)" font-size="16.5" font-weight="400" fill="#999999" stroke="#999999" stroke-width="0" text-anchor="middle" >Jul</text>
<text transform="translate(475.0,561.40) scale(1,1.06)" font-size="16.5" font-weight="400" fill="#999999" stroke="#999999" stroke-width="0" text-anchor="middle" >Jan 2016</text>
<text transform="translate(593.5,561.40) scale(1,1.06)" font-size="16.5" font-weight="400" fill="#999999" stroke="#999999" stroke-width="0" text-anchor="middle" >Jul</text>
<text transform="translate(712.0,561.40) scale(1,1.06)" font-size="16.5" font-weight="400" fill="#999999" stroke="#999999" stroke-width="0" text-anchor="middle" >Jan 2017</text>
<text transform="translate(830.5,561.40) scale(1,1.06)" font-size="16.5" font-weight="400" fill="#999999" stroke="#999999" stroke-width="0" text-anchor="middle" >Jul</text>
<text transform="translate(949.0,561.40) scale(1,1.06)" font-size="16.5" font-weight="400" fill="#999999" stroke="#999999" stroke-width="0" text-anchor="middle" >Jan 2018</text>
<text transform="translate(1067.5,561.40) scale(1,1.06)" font-size="16.5" font-weight="400" fill="#999999" stroke="#999999" stroke-width="0" text-anchor="middle" >Jul</text>
<text transform="translate(1186.0,561.40) scale(1,1.06)" font-size="16.5" font-weight="400" fill="#999999" stroke="#999999" stroke-width="0" text-anchor="middle" >Jan 2019</text>
<text transform="translate(1304.5,561.40) scale(1,1.06)" font-size="16.5" font-weight="400" fill="#999999" stroke="#999999" stroke-width="0" text-anchor="middle" >Jul</text>
<text transform="translate(1390,288.60) scale(1,1.06)" font-size="16.5" font-weight="400" fill="#999999" stroke="#999999" stroke-width="0" text-anchor="end" >750K</text>
<text transform="translate(1390,379.80) scale(1,1.06)" font-size="16.5" font-weight="400" fill="#999999" stroke="#999999" stroke-width="0" text-anchor="end" >500K</text>
<text transform="translate(1390,471.10) scale(1,1.06)" font-size="16.5" font-weight="400" fill="#999999" stroke="#999999" stroke-width="0" text-anchor="end" >250K</text>
<text transform="translate(1390,561.40) scale(1,1.06)" font-size="16.5" font-weight="400" fill="#999999" stroke="#999999" stroke-width="0" text-anchor="end" >0</text>
<text transform="translate(340,634.20) scale(1,1.06)" font-size="24" font-weight="700" fill="#333333" stroke="#333333" stroke-width="0.072" text-anchor="start" >Organic keywords</text>
<rect x="556" y="617" width="2.2" height="2.2" fill="#b5b5b5"/><rect x="556" y="620.6" width="2.2" height="7.4" fill="#b5b5b5"/>
<text transform="translate(573,634.20) scale(1,1.06)" font-size="24" font-weight="400" fill="#0b4ca3" stroke="#0b4ca3" stroke-width="0.12" text-anchor="start" >596,380</text>
<rect x="339" y="676.4" width="1051" height="1.2" fill="#e6e6e6"/>
<rect x="339" y="775.8" width="1051" height="1.2" fill="#e6e6e6"/>
<rect x="339" y="874.4" width="1051" height="1.2" fill="#e6e6e6"/>
<polygon points="339.8,948.3 373.0,946.3 392.6,947.5 408.3,944.3 424.0,937.7 447.5,937.3 457.3,932.6 472.9,919.7 506.2,921.6 518.0,924.8 549.3,926.7 584.5,925.6 604.1,927.9 631.5,930.6 666.7,932.6 672.0,932.6 673.8,924.0 682.4,922.8 684.3,914.2 707.8,913.0 717.6,907.1 729.4,901.3 737.2,891.5 747.0,871.9 760.7,866.0 780.3,852.3 799.8,849.2 827.3,850.4 839.0,844.5 854.7,834.7 860.0,834.0 872.0,837.0 884.0,840.6 899.0,837.0 905.0,831.6 920.0,835.5 932.0,831.6 938.0,819.0 950.0,804.0 968.0,799.5 971.0,793.5 983.0,790.5 999.5,784.5 1013.0,787.5 1034.0,786.0 1046.0,792.0 1067.0,793.5 1076.0,787.5 1097.0,781.5 1109.0,782.4 1133.0,786.0 1142.0,801.0 1148.0,808.5 1149.4,826.5 1160.0,826.5 1181.0,819.0 1190.0,819.0 1208.0,827.0 1220.0,824.4 1233.4,816.0 1235.0,813.0 1247.0,800.4 1259.0,797.4 1265.0,798.6 1271.0,793.5 1280.0,789.6 1292.0,781.5 1307.0,763.5 1316.0,757.5 1326.4,744.0 1334.0,736.5 1338.8,737.4 1338.8,973.4 339.8,973.4" fill="#fde4cd"/>
<polyline points="339.8,948.3 373.0,946.3 392.6,947.5 408.3,944.3 424.0,937.7 447.5,937.3 457.3,932.6 472.9,919.7 506.2,921.6 518.0,924.8 549.3,926.7 584.5,925.6 604.1,927.9 631.5,930.6 666.7,932.6 672.0,932.6 673.8,924.0 682.4,922.8 684.3,914.2 707.8,913.0 717.6,907.1 729.4,901.3 737.2,891.5 747.0,871.9 760.7,866.0 780.3,852.3 799.8,849.2 827.3,850.4 839.0,844.5 854.7,834.7 860.0,834.0 872.0,837.0 884.0,840.6 899.0,837.0 905.0,831.6 920.0,835.5 932.0,831.6 938.0,819.0 950.0,804.0 968.0,799.5 971.0,793.5 983.0,790.5 999.5,784.5 1013.0,787.5 1034.0,786.0 1046.0,792.0 1067.0,793.5 1076.0,787.5 1097.0,781.5 1109.0,782.4 1133.0,786.0 1142.0,801.0 1148.0,808.5 1149.4,826.5 1160.0,826.5 1181.0,819.0 1190.0,819.0 1208.0,827.0 1220.0,824.4 1233.4,816.0 1235.0,813.0 1247.0,800.4 1259.0,797.4 1265.0,798.6 1271.0,793.5 1280.0,789.6 1292.0,781.5 1307.0,763.5 1316.0,757.5 1326.4,744.0 1334.0,736.5 1338.8,737.4" fill="none" stroke="#fbb173" stroke-width="2.6" stroke-linejoin="round"/>
<polygon points="339.8,970.6 467.0,969.5 670.6,969.5 721.5,967.5 742.0,965.0 748.0,962.0 780.3,958.2 819.4,956.1 860.0,954.5 890.0,955.4 905.0,954.0 935.0,953.3 938.0,951.0 971.0,948.5 974.0,947.3 1070.0,945.5 1130.0,946.4 1148.0,948.0 1149.4,950.3 1205.0,951.5 1235.0,950.3 1256.0,948.5 1280.0,950.0 1316.0,946.4 1334.0,940.4 1338.8,942.0 1338.8,973.4 339.8,973.4" fill="#fcbb80"/>
<polyline points="339.8,970.6 467.0,969.5 670.6,969.5 721.5,967.5 742.0,965.0 748.0,962.0 780.3,958.2 819.4,956.1 860.0,954.5 890.0,955.4 905.0,954.0 935.0,953.3 938.0,951.0 971.0,948.5 974.0,947.3 1070.0,945.5 1130.0,946.4 1148.0,948.0 1149.4,950.3 1205.0,951.5 1235.0,950.3 1256.0,948.5 1280.0,950.0 1316.0,946.4 1334.0,940.4 1338.8,942.0" fill="none" stroke="#fa8d2a" stroke-width="2.8" stroke-linejoin="round"/>
<polygon points="339.8,971.8 670.6,970.6 760.7,968.6 860.0,967.4 935.0,965.3 974.0,963.8 1148.0,964.4 1205.0,966.0 1310.0,963.0 1328.0,960.5 1338.8,961.0 1338.8,973.4 339.8,973.4" fill="#fd8912"/>
<polyline points="339.8,971.8 670.6,970.6 760.7,968.6 860.0,967.4 935.0,965.3 974.0,963.8 1148.0,964.4 1205.0,966.0 1310.0,963.0 1328.0,960.5 1338.8,961.0" fill="none" stroke="#e8700a" stroke-width="2" stroke-linejoin="round"/>
<rect x="339" y="972.8" width="1051" height="1.6" fill="#e4e7ea"/>
<text transform="translate(356.5,999.40) scale(1,1.06)" font-size="16.5" font-weight="400" fill="#999999" stroke="#999999" stroke-width="0" text-anchor="middle" >Jul</text>
<text transform="translate(475.0,999.40) scale(1,1.06)" font-size="16.5" font-weight="400" fill="#999999" stroke="#999999" stroke-width="0" text-anchor="middle" >Jan 2016</text>
<text transform="translate(593.5,999.40) scale(1,1.06)" font-size="16.5" font-weight="400" fill="#999999" stroke="#999999" stroke-width="0" text-anchor="middle" >Jul</text>
<text transform="translate(712.0,999.40) scale(1,1.06)" font-size="16.5" font-weight="400" fill="#999999" stroke="#999999" stroke-width="0" text-anchor="middle" >Jan 2017</text>
<text transform="translate(830.5,999.40) scale(1,1.06)" font-size="16.5" font-weight="400" fill="#999999" stroke="#999999" stroke-width="0" text-anchor="middle" >Jul</text>
<text transform="translate(949.0,999.40) scale(1,1.06)" font-size="16.5" font-weight="400" fill="#999999" stroke="#999999" stroke-width="0" text-anchor="middle" >Jan 2018</text>
<text transform="translate(1067.5,999.40) scale(1,1.06)" font-size="16.5" font-weight="400" fill="#999999" stroke="#999999" stroke-width="0" text-anchor="middle" >Jul</text>
<text transform="translate(1186.0,999.40) scale(1,1.06)" font-size="16.5" font-weight="400" fill="#999999" stroke="#999999" stroke-width="0" text-anchor="middle" >Jan 2019</text>
<text transform="translate(1304.5,999.40) scale(1,1.06)" font-size="16.5" font-weight="400" fill="#999999" stroke="#999999" stroke-width="0" text-anchor="middle" >Jul</text>
<text transform="translate(1390,703.90) scale(1,1.06)" font-size="16.5" font-weight="400" fill="#999999" stroke="#999999" stroke-width="0" text-anchor="end" >750K</text>
<text transform="translate(1390,802.90) scale(1,1.06)" font-size="16.5" font-weight="400" fill="#999999" stroke="#999999" stroke-width="0" text-anchor="end" >500K</text>
<text transform="translate(1390,900.40) scale(1,1.06)" font-size="16.5" font-weight="400" fill="#999999" stroke="#999999" stroke-width="0" text-anchor="end" >250K</text>
<text transform="translate(1390,999.40) scale(1,1.06)" font-size="16.5" font-weight="400" fill="#999999" stroke="#999999" stroke-width="0" text-anchor="end" >0</text>
<rect x="339.90000000000003" y="1023.8000000000001" width="20" height="20" rx="2.5" fill="url(#cb1)" stroke="#d8650c" stroke-width="1.2"/>
<path d="M344.8 1032.7L349.3 1039.2L361.3 1020.7" fill="none" stroke="#111" stroke-width="2.6" stroke-linecap="butt" stroke-linejoin="miter"/>
<text transform="translate(373,1041.40) scale(1,1.06)" font-size="20" font-weight="400" fill="#333333" stroke="#333333" stroke-width="0.12" text-anchor="start" >#1–3</text>
<rect x="449.1" y="1023.8000000000001" width="20" height="20" rx="2.5" fill="url(#cb2)" stroke="#f08a30" stroke-width="1.2"/>
<path d="M454.0 1032.7L458.5 1039.2L470.5 1020.7" fill="none" stroke="#111" stroke-width="2.6" stroke-linecap="butt" stroke-linejoin="miter"/>
<text transform="translate(482.5,1041.40) scale(1,1.06)" font-size="20.5" font-weight="400" fill="#333333" stroke="#333333" stroke-width="0.12" text-anchor="start" >#4–10</text>
<rect x="572.0" y="1023.8000000000001" width="20" height="20" rx="2.5" fill="url(#cb3)" stroke="#f5b888" stroke-width="1.2"/>
<path d="M576.9 1032.7L581.4 1039.2L593.4 1020.7" fill="none" stroke="#111" stroke-width="2.6" stroke-linecap="butt" stroke-linejoin="miter"/>
<text transform="translate(604,1041.40) scale(1,1.06)" font-size="21" font-weight="400" fill="#333333" stroke="#333333" stroke-width="0.12" text-anchor="start" >#11–100</text>
<text transform="translate(340,1123.40) scale(1,1.06)" font-size="24" font-weight="700" fill="#333333" stroke="#333333" stroke-width="0.072" text-anchor="start" >Traffic value</text>
<rect x="486" y="1106" width="2.2" height="2.2" fill="#b5b5b5"/><rect x="486" y="1109.6" width="2.2" height="7.4" fill="#b5b5b5"/>
<text transform="translate(502,1123.40) scale(1,1.06)" font-size="24" font-weight="400" fill="#0b4ca3" stroke="#0b4ca3" stroke-width="0.12" text-anchor="start" >$191,425</text>
<rect x="339" y="1165.4" width="1051" height="1.2" fill="#e6e6e6"/>
<text transform="translate(1390,1192.90) scale(1,1.06)" font-size="16.5" font-weight="400" fill="#999999" stroke="#999999" stroke-width="0" text-anchor="end" >300K</text>
</g>
<g id="right">
<text transform="translate(1457.3,128.40) scale(1,1.06)" font-size="21" font-weight="700" fill="#333333" stroke="#333333" stroke-width="0.072" text-anchor="start" >Country</text>
<text transform="translate(1617,128.40) scale(1,1.06)" font-size="21" font-weight="700" fill="#333333" stroke="#333333" stroke-width="0.072" text-anchor="start" >Keywords</text>
<text transform="translate(1727,128.40) scale(1,1.06)" font-size="21" font-weight="700" fill="#333333" stroke="#333333" stroke-width="0.072" text-anchor="start" >Traffic</text>
<rect x="1795" y="105" width="2.2" height="2.2" fill="#b5b5b5"/><rect x="1795" y="108.6" width="2.2" height="7.4" fill="#b5b5b5"/>
<text transform="translate(1493.3,168.40) scale(1,1.06)" font-size="21" font-weight="400" fill="#333333" stroke="#333333" stroke-width="0.12" text-anchor="start" >All count…</text>
<text transform="translate(1721.3,168.40) scale(1,1.06)" font-size="21" font-weight="400" fill="#333333" stroke="#333333" stroke-width="0.12" text-anchor="end" >1.0M</text>
<text transform="translate(1797.3,168.40) scale(1,1.06)" font-size="21" font-weight="400" fill="#333333" stroke="#333333" stroke-width="0.12" text-anchor="end" >945K</text>
<rect x="1425" y="184" width="479" height="43.5" fill="#0b5baa"/>
<g transform="translate(1457,194)"><rect x="0" y="0" width="29" height="1.5" fill="#c8283a"/><rect x="0" y="3" width="29" height="1.5" fill="#c8283a"/><rect x="0" y="6" width="29" height="1.5" fill="#c8283a"/><rect x="0" y="9" width="29" height="1.5" fill="#c8283a"/><rect x="0" y="12" width="29" height="1.5" fill="#c8283a"/><rect x="0" y="15" width="29" height="1.5" fill="#c8283a"/><rect x="0" y="18" width="29" height="1.5" fill="#c8283a"/><rect x="0" y="1.5" width="29" height="1.5" fill="#ffffff"/><rect x="0" y="4.5" width="29" height="1.5" fill="#ffffff"/><rect x="0" y="7.5" width="29" height="1.5" fill="#ffffff"/><rect x="0" y="10.5" width="29" height="1.5" fill="#ffffff"/><rect x="0" y="13.5" width="29" height="1.5" fill="#ffffff"/><rect x="0" y="16.5" width="29" height="1.5" fill="#ffffff"/><rect x="0" y="19.5" width="29" height="1.5" fill="#ffffff"/><rect x="0" y="0" width="13" height="10.5" fill="#3c3b6e"/><rect x="0" y="0" width="13" height="10.5" fill="url(#stars)"/></g>
<text transform="translate(1493.3,212.40) scale(1,1.06)" font-size="21" font-weight="400" fill="#ffffff" stroke="#ffffff" stroke-width="0.12" text-anchor="start" >United S…</text>
<text transform="translate(1721.3,212.40) scale(1,1.06)" font-size="21" font-weight="400" fill="#dfe8f5" stroke="#dfe8f5" stroke-width="0.12" text-anchor="end" >596K</text>
<text transform="translate(1797.3,212.40) scale(1,1.06)" font-size="21" font-weight="400" fill="#ffffff" stroke="#ffffff" stroke-width="0.12" text-anchor="end" >589K</text>
<text transform="translate(1870.5,212.40) scale(1,1.06)" font-size="21" font-weight="400" fill="#93b3da" stroke="#93b3da" stroke-width="0" text-anchor="end" >62.3%</text>
<g transform="translate(1457,238)"><rect width="29" height="21" fill="#012169"/><path d="M0 0L29 21M29 0L0 21" stroke="#fff" stroke-width="4.5"/><path d="M0 0L29 21M29 0L0 21" stroke="#c8102e" stroke-width="1.6"/><path d="M14.5 0V21M0 10.5H29" stroke="#fff" stroke-width="6"/><path d="M14.5 0V21M0 10.5H29" stroke="#c8102e" stroke-width="3.4"/></g>
<text transform="translate(1493.3,256.40) scale(1,1.06)" font-size="21" font-weight="400" fill="#333333" stroke="#333333" stroke-width="0.12" text-anchor="start" >United K…</text>
<text transform="translate(1721.3,256.40) scale(1,1.06)" font-size="21" font-weight="400" fill="#0b4ca3" stroke="#0b4ca3" stroke-width="0.12" text-anchor="end" >63.4K</text>
<text transform="translate(1797.3,256.40) scale(1,1.06)" font-size="21" font-weight="400" fill="#333333" stroke="#333333" stroke-width="0.12" text-anchor="end" >46.3K</text>
<text transform="translate(1870.5,256.40) scale(1,1.06)" font-size="21" font-weight="400" fill="#999999" stroke="#999999" stroke-width="0" text-anchor="end" >4.9%</text>
<g transform="translate(1457,282)"><rect width="29" height="21" fill="#fff"/><rect width="7.3" height="21" fill="#d52b1e"/><rect x="21.7" width="7.3" height="21" fill="#d52b1e"/><path d="M14.5 4.5L15.8 7.5L17.8 6.8L17 10.5L19.5 9.5L19 11.8L16 13.5L15 13.8V16.5H14V13.8L13 13.5L10 11.8L9.5 9.5L12 10.5L11.2 6.8L13.2 7.5Z" fill="#d52b1e"/></g>
<text transform="translate(1493.3,300.40) scale(1,1.06)" font-size="21" font-weight="400" fill="#333333" stroke="#333333" stroke-width="0.12" text-anchor="start" >Canada</text>
<text transform="translate(1721.3,300.40) scale(1,1.06)" font-size="21" font-weight="400" fill="#0b4ca3" stroke="#0b4ca3" stroke-width="0.12" text-anchor="end" >53.9K</text>
<text transform="translate(1797.3,300.40) scale(1,1.06)" font-size="21" font-weight="400" fill="#333333" stroke="#333333" stroke-width="0.12" text-anchor="end" >27.1K</text>
<text transform="translate(1870.5,300.40) scale(1,1.06)" font-size="21" font-weight="400" fill="#999999" stroke="#999999" stroke-width="0" text-anchor="end" >2.9%</text>
<g transform="translate(1457,326)"><circle cx="14.5" cy="10.5" r="6" fill="#cd2e3a"/><path d="M8.5 10.5A3 3 0 0 0 14.5 10.5A3 3 0 0 1 20.5 10.5A6 6 0 0 1 8.5 10.5Z" fill="#0047a0"/><g transform="rotate(-35 5.2 4.2)"><rect x="2.4000000000000004" y="2.2" width="5.6" height="4" fill="#222"/><rect x="2.4000000000000004" y="3.6" width="5.6" height="0.6" fill="#fff"/><rect x="2.4000000000000004" y="4.8" width="5.6" height="0.6" fill="#fff"/></g><g transform="rotate(35 23.8 4.2)"><rect x="21.0" y="2.2" width="5.6" height="4" fill="#222"/><rect x="21.0" y="3.6" width="5.6" height="0.6" fill="#fff"/><rect x="21.0" y="4.8" width="5.6" height="0.6" fill="#fff"/></g><g transform="rotate(35 5.2 16.8)"><rect x="2.4000000000000004" y="14.8" width="5.6" height="4" fill="#222"/><rect x="2.4000000000000004" y="16.2" width="5.6" height="0.6" fill="#fff"/><rect x="2.4000000000000004" y="17.400000000000002" width="5.6" height="0.6" fill="#fff"/></g><g transform="rotate(-35 23.8 16.8)"><rect x="21.0" y="14.8" width="5.6" height="4" fill="#222"/><rect x="21.0" y="16.2" width="5.6" height="0.6" fill="#fff"/><rect x="21.0" y="17.400000000000002" width="5.6" height="0.6" fill="#fff"/></g></g>
<text transform="translate(1493.3,344.40) scale(1,1.06)" font-size="21" font-weight="400" fill="#333333" stroke="#333333" stroke-width="0.12" text-anchor="start" >Korea</text>
<text transform="translate(1721.3,344.40) scale(1,1.06)" font-size="21" font-weight="400" fill="#0b4ca3" stroke="#0b4ca3" stroke-width="0.12" text-anchor="end" >1.3K</text>
<text transform="translate(1797.3,344.40) scale(1,1.06)" font-size="21" font-weight="400" fill="#333333" stroke="#333333" stroke-width="0.12" text-anchor="end" >24.3K</text>
<text transform="translate(1870.5,344.40) scale(1,1.06)" font-size="21" font-weight="400" fill="#999999" stroke="#999999" stroke-width="0" text-anchor="end" >2.6%</text>
<g transform="translate(1457,370)"><rect width="29" height="7" fill="#f7931e"/><rect y="7" width="29" height="7" fill="#fff"/><rect y="14" width="29" height="7" fill="#138808"/><circle cx="14.5" cy="10.5" r="2.6" fill="none" stroke="#000080" stroke-width="1"/></g>
<text transform="translate(1493.3,388.40) scale(1,1.06)" font-size="21" font-weight="400" fill="#333333" stroke="#333333" stroke-width="0.12" text-anchor="start" >India</text>
<text transform="translate(1721.3,388.40) scale(1,1.06)" font-size="21" font-weight="400" fill="#0b4ca3" stroke="#0b4ca3" stroke-width="0.12" text-anchor="end" >19.5K</text>
<text transform="translate(1797.3,388.40) scale(1,1.06)" font-size="21" font-weight="400" fill="#333333" stroke="#333333" stroke-width="0.12" text-anchor="end" >23.9K</text>
<text transform="translate(1870.5,388.40) scale(1,1.06)" font-size="21" font-weight="400" fill="#999999" stroke="#999999" stroke-width="0" text-anchor="end" >2.5%</text>
<g transform="translate(1457,414)"><rect width="29" height="21" fill="#012169"/><path d="M0 0L14.5 10.5M14.5 0L0 10.5" stroke="#fff" stroke-width="2.4"/><path d="M0 0L14.5 10.5M14.5 0L0 10.5" stroke="#c8102e" stroke-width="0.9"/><path d="M7.25 0V10.5M0 5.25H14.5" stroke="#fff" stroke-width="3.2"/><path d="M7.25 0V10.5M0 5.25H14.5" stroke="#c8102e" stroke-width="1.8"/><circle cx="7" cy="16" r="2" fill="#fff"/><circle cx="22" cy="5" r="1.2" fill="#fff"/><circle cx="19" cy="10" r="1.2" fill="#fff"/><circle cx="25" cy="11" r="1.2" fill="#fff"/><circle cx="22" cy="17" r="1.3" fill="#fff"/></g>
<text transform="translate(1493.3,432.40) scale(1,1.06)" font-size="21" font-weight="400" fill="#333333" stroke="#333333" stroke-width="0.12" text-anchor="start" >Australia</text>
<text transform="translate(1721.3,432.40) scale(1,1.06)" font-size="21" font-weight="400" fill="#0b4ca3" stroke="#0b4ca3" stroke-width="0.12" text-anchor="end" >51.5K</text>
<text transform="translate(1797.3,432.40) scale(1,1.06)" font-size="21" font-weight="400" fill="#333333" stroke="#333333" stroke-width="0.12" text-anchor="end" >23.4K</text>
<text transform="translate(1870.5,432.40) scale(1,1.06)" font-size="21" font-weight="400" fill="#999999" stroke="#999999" stroke-width="0" text-anchor="end" >2.5%</text>
<g transform="translate(1457,458)"><rect width="29" height="7" fill="#111"/><rect y="7" width="29" height="7" fill="#dd0000"/><rect y="14" width="29" height="7" fill="#ffce00"/></g>
<text transform="translate(1493.3,476.40) scale(1,1.06)" font-size="21" font-weight="400" fill="#333333" stroke="#333333" stroke-width="0.12" text-anchor="start" >Germany</text>
<text transform="translate(1721.3,476.40) scale(1,1.06)" font-size="21" font-weight="400" fill="#0b4ca3" stroke="#0b4ca3" stroke-width="0.12" text-anchor="end" >25.2K</text>
<text transform="translate(1797.3,476.40) scale(1,1.06)" font-size="21" font-weight="400" fill="#333333" stroke="#333333" stroke-width="0.12" text-anchor="end" >19.9K</text>
<text transform="translate(1870.5,476.40) scale(1,1.06)" font-size="21" font-weight="400" fill="#999999" stroke="#999999" stroke-width="0" text-anchor="end" >2.1%</text>
<g transform="translate(1457,502)"><rect width="29" height="21" fill="#da251d"/><path d="M14.5 4.5L16 9.2H21L17 12L18.5 16.7L14.5 13.8L10.5 16.7L12 12L8 9.2H13Z" fill="#ffff00"/></g>
<text transform="translate(1493.3,520.40) scale(1,1.06)" font-size="21" font-weight="400" fill="#333333" stroke="#333333" stroke-width="0.12" text-anchor="start" >Vietnam</text>
<text transform="translate(1721.3,520.40) scale(1,1.06)" font-size="21" font-weight="400" fill="#0b4ca3" stroke="#0b4ca3" stroke-width="0.12" text-anchor="end" >5.5K</text>
<text transform="translate(1797.3,520.40) scale(1,1.06)" font-size="21" font-weight="400" fill="#333333" stroke="#333333" stroke-width="0.12" text-anchor="end" >18.1K</text>
<text transform="translate(1870.5,520.40) scale(1,1.06)" font-size="21" font-weight="400" fill="#999999" stroke="#999999" stroke-width="0" text-anchor="end" >1.9%</text>
<g transform="translate(1457,546)"><rect width="29" height="10.5" fill="#e70011"/><rect y="10.5" width="29" height="10.5" fill="#fff"/></g>
<text transform="translate(1493.3,564.40) scale(1,1.06)" font-size="21" font-weight="400" fill="#333333" stroke="#333333" stroke-width="0.12" text-anchor="start" >Indonesia</text>
<text transform="translate(1721.3,564.40) scale(1,1.06)" font-size="21" font-weight="400" fill="#0b4ca3" stroke="#0b4ca3" stroke-width="0.12" text-anchor="end" >9.1K</text>
<text transform="translate(1797.3,564.40) scale(1,1.06)" font-size="21" font-weight="400" fill="#333333" stroke="#333333" stroke-width="0.12" text-anchor="end" >17.2K</text>
<text transform="translate(1870.5,564.40) scale(1,1.06)" font-size="21" font-weight="400" fill="#999999" stroke="#999999" stroke-width="0" text-anchor="end" >1.8%</text>
<g transform="translate(1457,590)"><rect width="9.7" height="21" fill="#002395"/><rect x="9.7" width="9.6" height="21" fill="#fff"/><rect x="19.3" width="9.7" height="21" fill="#ed2939"/></g>
<text transform="translate(1493.3,608.40) scale(1,1.06)" font-size="21" font-weight="400" fill="#333333" stroke="#333333" stroke-width="0.12" text-anchor="start" >France</text>
<text transform="translate(1721.3,608.40) scale(1,1.06)" font-size="21" font-weight="400" fill="#0b4ca3" stroke="#0b4ca3" stroke-width="0.12" text-anchor="end" >18.3K</text>
<text transform="translate(1797.3,608.40) scale(1,1.06)" font-size="21" font-weight="400" fill="#333333" stroke="#333333" stroke-width="0.12" text-anchor="end" >15.8K</text>
<text transform="translate(1870.5,608.40) scale(1,1.06)" font-size="21" font-weight="400" fill="#999999" stroke="#999999" stroke-width="0" text-anchor="end" >1.7%</text>
<g transform="translate(1457,634)"><rect width="29" height="21" fill="#006a4e"/><circle cx="13" cy="10.5" r="5.8" fill="#f42a41"/></g>
<text transform="translate(1493.3,652.40) scale(1,1.06)" font-size="21" font-weight="400" fill="#333333" stroke="#333333" stroke-width="0.12" text-anchor="start" >Banglad…</text>
<text transform="translate(1721.3,652.40) scale(1,1.06)" font-size="21" font-weight="400" fill="#0b4ca3" stroke="#0b4ca3" stroke-width="0.12" text-anchor="end" >1.9K</text>
<text transform="translate(1797.3,652.40) scale(1,1.06)" font-size="21" font-weight="400" fill="#333333" stroke="#333333" stroke-width="0.12" text-anchor="end" >13.3K</text>
<text transform="translate(1870.5,652.40) scale(1,1.06)" font-size="21" font-weight="400" fill="#999999" stroke="#999999" stroke-width="0" text-anchor="end" >1.4%</text>
<g transform="translate(1457,678)"><rect width="29" height="21" fill="#c1272d"/><path d="M14.5 4.5L16 9.2H21L17 12L18.5 16.7L14.5 13.8L10.5 16.7L12 12L8 9.2H13Z" fill="none" stroke="#006233" stroke-width="1"/></g>
<text transform="translate(1493.3,696.40) scale(1,1.06)" font-size="21" font-weight="400" fill="#333333" stroke="#333333" stroke-width="0.12" text-anchor="start" >Morocco</text>
<text transform="translate(1721.3,696.40) scale(1,1.06)" font-size="21" font-weight="400" fill="#0b4ca3" stroke="#0b4ca3" stroke-width="0.12" text-anchor="end" >1.9K</text>
<text transform="translate(1797.3,696.40) scale(1,1.06)" font-size="21" font-weight="400" fill="#333333" stroke="#333333" stroke-width="0.12" text-anchor="end" >10.8K</text>
<text transform="translate(1870.5,696.40) scale(1,1.06)" font-size="21" font-weight="400" fill="#999999" stroke="#999999" stroke-width="0" text-anchor="end" >1.1%</text>
<g transform="translate(1457,722)"><rect width="29" height="7" fill="#ae1c28"/><rect y="7" width="29" height="7" fill="#fff"/><rect y="14" width="29" height="7" fill="#21468b"/></g>
<text transform="translate(1493.3,740.40) scale(1,1.06)" font-size="21" font-weight="400" fill="#333333" stroke="#333333" stroke-width="0.12" text-anchor="start" >Netherla…</text>
<text transform="translate(1721.3,740.40) scale(1,1.06)" font-size="21" font-weight="400" fill="#0b4ca3" stroke="#0b4ca3" stroke-width="0.12" text-anchor="end" >9.7K</text>
<text transform="translate(1797.3,740.40) scale(1,1.06)" font-size="21" font-weight="400" fill="#333333" stroke="#333333" stroke-width="0.12" text-anchor="end" >6.9K</text>
<text transform="translate(1870.5,740.40) scale(1,1.06)" font-size="21" font-weight="400" fill="#999999" stroke="#999999" stroke-width="0" text-anchor="end" >1%</text>
<path d="M1834 727.5L1826.3 733.4L1834 739.3" fill="none" stroke="#999999" stroke-width="1.6"/>
<g transform="translate(1457,766)"><rect width="9.7" height="21" fill="#0a6a32"/><rect x="9.7" width="9.6" height="21" fill="#fff"/><rect x="19.3" width="9.7" height="21" fill="#ee1c25"/></g>
<text transform="translate(1493.3,784.40) scale(1,1.06)" font-size="21" font-weight="400" fill="#333333" stroke="#333333" stroke-width="0.12" text-anchor="start" >Italy</text>
<text transform="translate(1721.3,784.40) scale(1,1.06)" font-size="21" font-weight="400" fill="#0b4ca3" stroke="#0b4ca3" stroke-width="0.12" text-anchor="end" >10.9K</text>
<text transform="translate(1797.3,784.40) scale(1,1.06)" font-size="21" font-weight="400" fill="#333333" stroke="#333333" stroke-width="0.12" text-anchor="end" >6.4K</text>
<text transform="translate(1870.5,784.40) scale(1,1.06)" font-size="21" font-weight="400" fill="#999999" stroke="#999999" stroke-width="0" text-anchor="end" >1%</text>
<path d="M1834 771.5L1826.3 777.4L1834 783.3" fill="none" stroke="#999999" stroke-width="1.6"/>
<text transform="translate(1741.6,822.10) scale(1,1.06)" font-size="21" font-weight="400" fill="#333333" stroke="#333333" stroke-width="0.12" text-anchor="start" >Show more</text>
<path d="M1856 810.5h12l-6.00 9z" fill="#333"/>
<text transform="translate(1457.4,915.70) scale(1,1.06)" font-size="24" font-weight="700" fill="#333333" stroke="#333333" stroke-width="0.072" text-anchor="start" >Top 10 competitors</text>
<rect x="1693.5" y="898" width="2.2" height="2.2" fill="#b5b5b5"/><rect x="1693.5" y="901.6" width="2.2" height="7.4" fill="#b5b5b5"/>
<circle cx="1476" cy="955.7" r="19" fill="#e8ebf1"/>
<text transform="translate(1476,963.80) scale(1,1.06)" font-size="20" font-weight="700" fill="#333333" stroke="#333333" stroke-width="0.072" text-anchor="middle" >1</text>
<text transform="translate(1510,959.60) scale(1,1.06)" font-size="21.5" font-weight="400" fill="#0b4ca3" stroke="#0b4ca3" stroke-width="0.12" text-anchor="start" >spreadshirt.com</text>
<path d="M1668 947.3h11.5l-5.75 9z" fill="#6f8fcf"/>
<circle cx="1476" cy="1007.2" r="19" fill="#e8ebf1"/>
<text transform="translate(1476,1015.30) scale(1,1.06)" font-size="20" font-weight="700" fill="#333333" stroke="#333333" stroke-width="0.072" text-anchor="middle" >2</text>
<text transform="translate(1510,1011.10) scale(1,1.06)" font-size="21.5" font-weight="400" fill="#0b4ca3" stroke="#0b4ca3" stroke-width="0.12" text-anchor="start" >redbubble.com</text>
<path d="M1659 998.8h11.5l-5.75 9z" fill="#6f8fcf"/>
<circle cx="1476" cy="1058.7" r="19" fill="#e8ebf1"/>
<text transform="translate(1476,1066.80) scale(1,1.06)" font-size="20" font-weight="700" fill="#333333" stroke="#333333" stroke-width="0.072" text-anchor="middle" >3</text>
<text transform="translate(1510,1062.60) scale(1,1.06)" font-size="21.5" font-weight="400" fill="#0b4ca3" stroke="#0b4ca3" stroke-width="0.12" text-anchor="start" >knowyourmeme.com</text>
<path d="M1714.7 1050.3h11.5l-5.75 9z" fill="#6f8fcf"/>
<circle cx="1476" cy="1110.2" r="19" fill="#e8ebf1"/>
<text transform="translate(1476,1118.30) scale(1,1.06)" font-size="20" font-weight="700" fill="#333333" stroke="#333333" stroke-width="0.072" text-anchor="middle" >4</text>
<text transform="translate(1510,1114.10) scale(1,1.06)" font-size="21.5" font-weight="400" fill="#0b4ca3" stroke="#0b4ca3" stroke-width="0.12" text-anchor="start" >me.me</text>
<path d="M1580.1 1101.8h11.5l-5.75 9z" fill="#6f8fcf"/>
<circle cx="1476" cy="1161.7" r="19" fill="#e8ebf1"/>
<text transform="translate(1476,1169.80) scale(1,1.06)" font-size="20" font-weight="700" fill="#333333" stroke="#333333" stroke-width="0.072" text-anchor="middle" >5</text>
<text transform="translate(1510,1165.60) scale(1,1.06)" font-size="21.5" font-weight="400" fill="#0b4ca3" stroke="#0b4ca3" stroke-width="0.12" text-anchor="start" >socialblade.com</text>
<path d="M1669.4 1153.3h11.5l-5.75 9z" fill="#6f8fcf"/>
</g>
</svg>
</body></html>
